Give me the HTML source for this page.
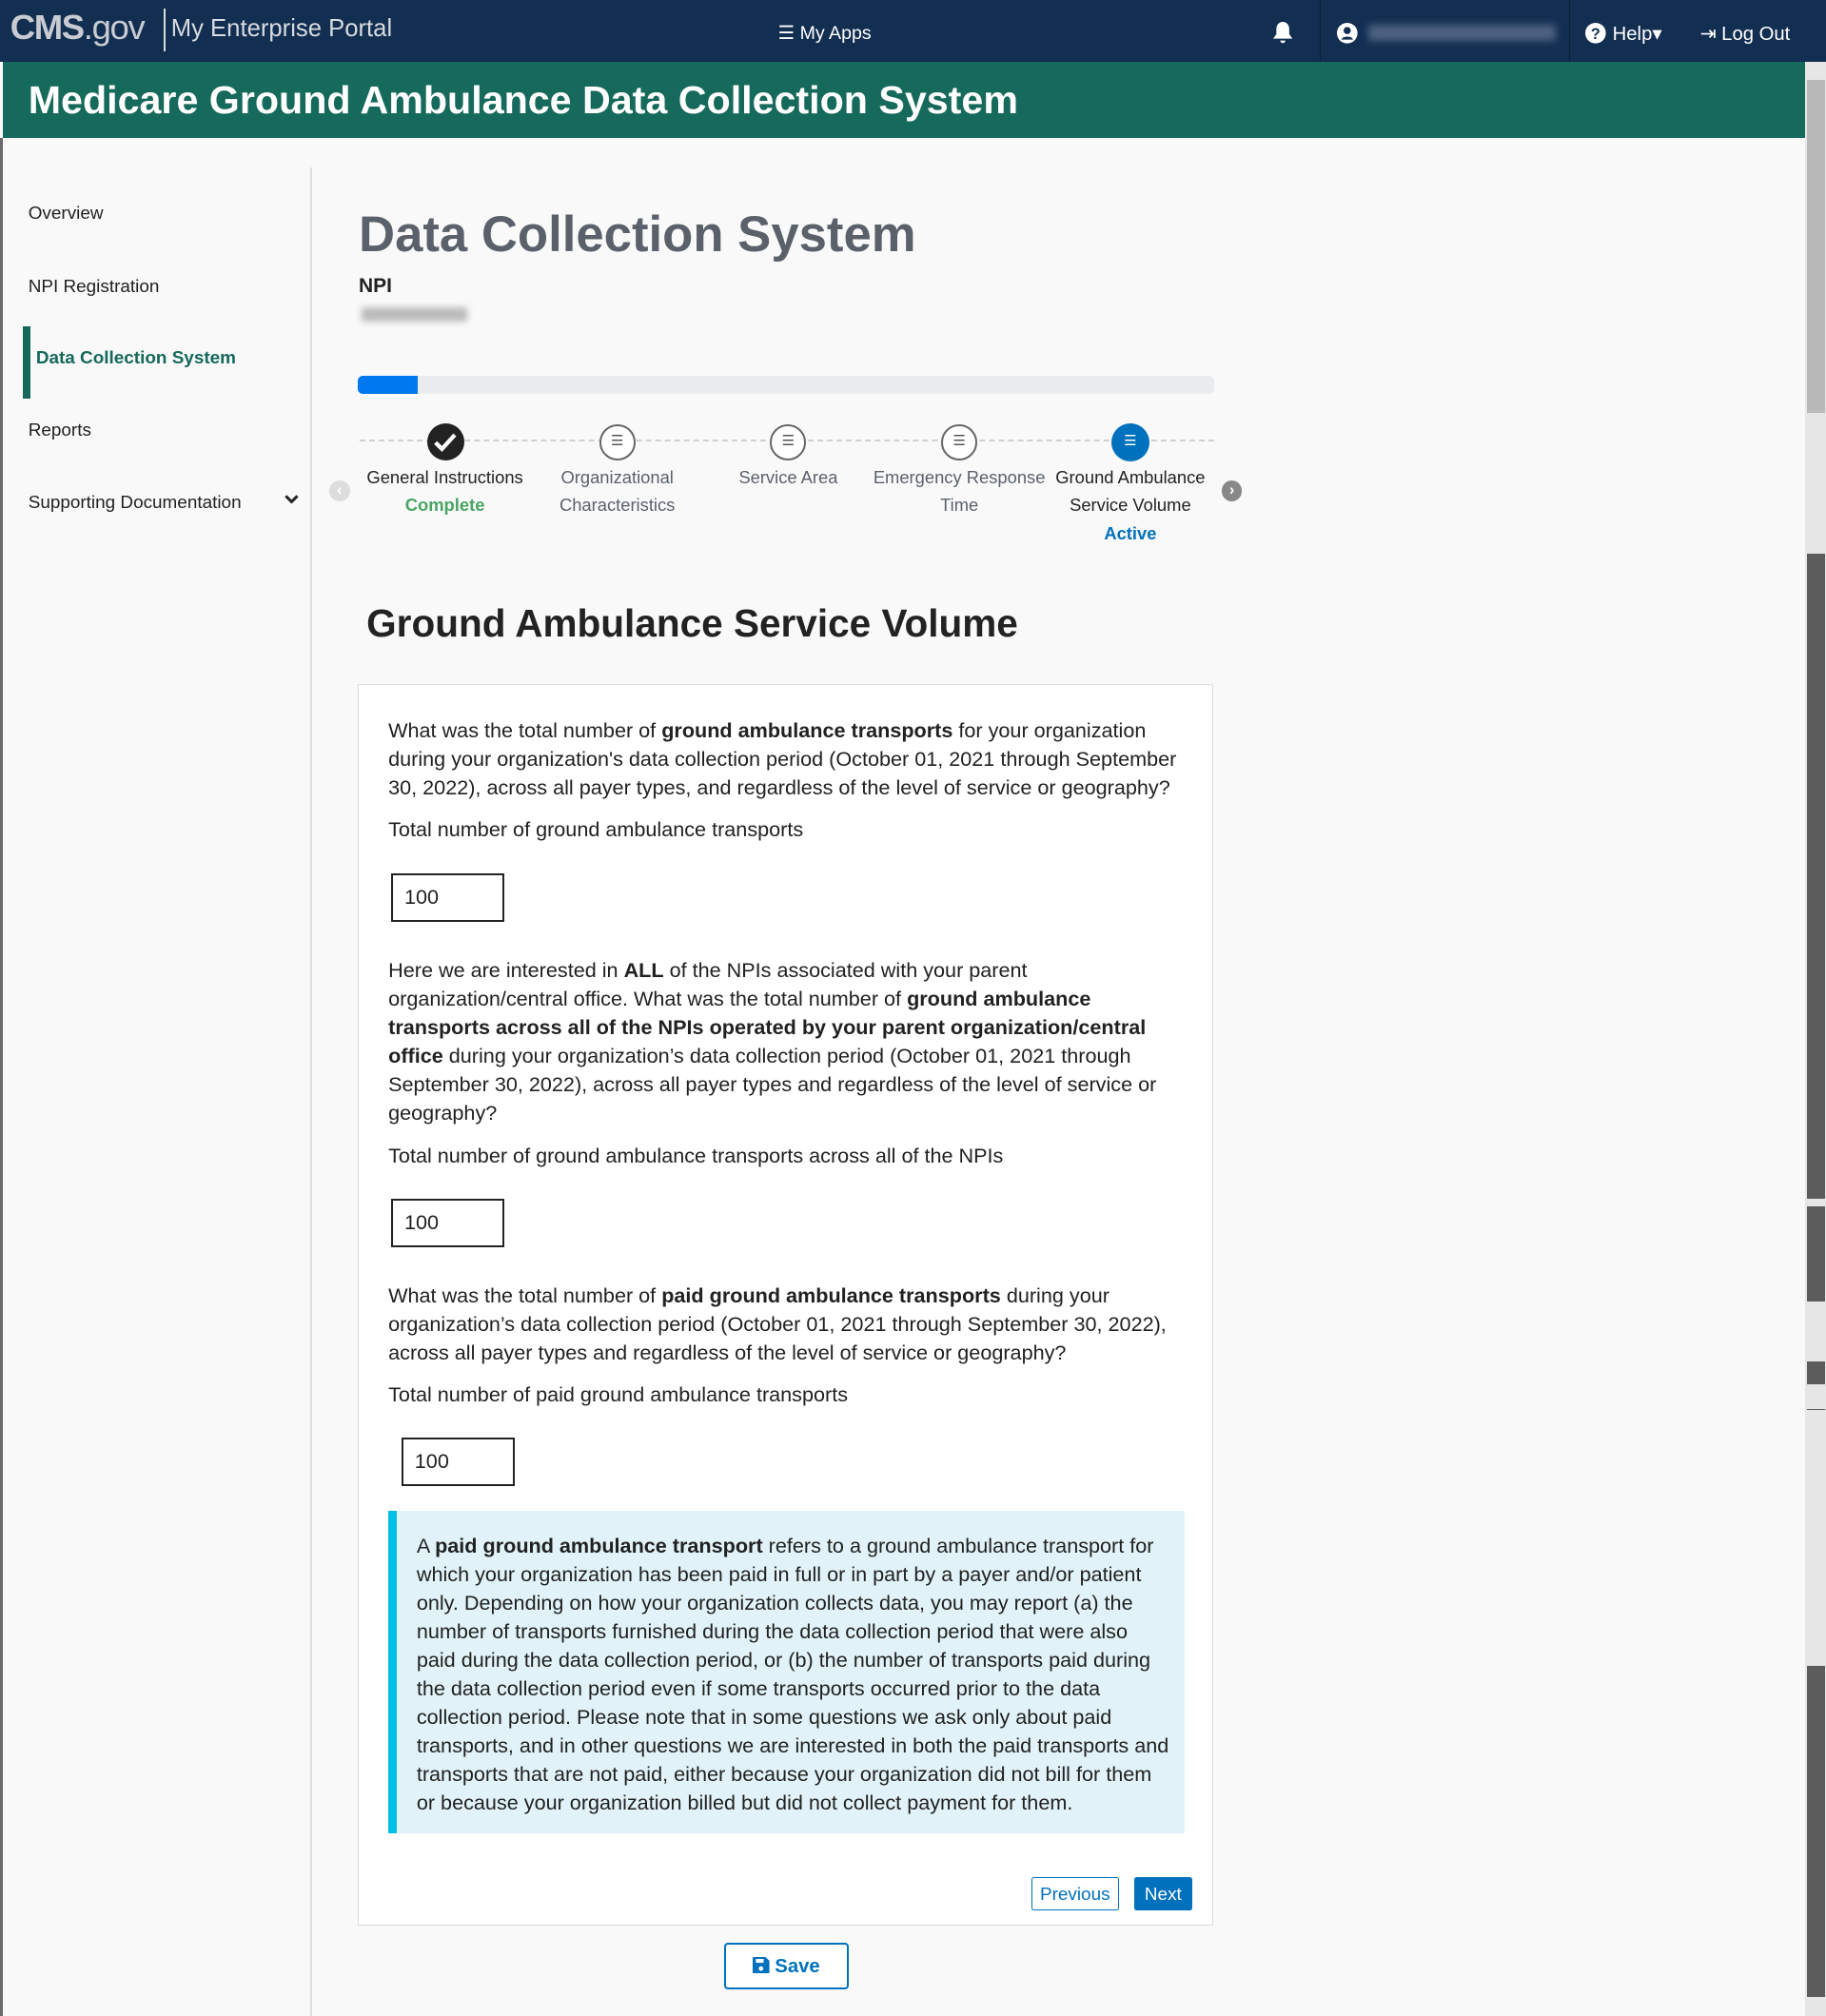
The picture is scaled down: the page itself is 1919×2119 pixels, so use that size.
<!DOCTYPE html>
<html><head><meta charset="utf-8"><style>
html,body{margin:0;padding:0;width:1919px;height:2119px;overflow:hidden;background:#f9f9f9;}
#w{zoom:1.35141;width:1420px;height:1568px;position:relative;font-family:"Liberation Sans",sans-serif;color:#212121;}
.a{position:absolute;white-space:nowrap;}
.nav{left:0;top:0;width:1420px;height:48px;background:#122e51;}
.hdr{left:2px;top:48px;width:1402px;height:59px;background:#166a5c;}
.q{font-size:16px;line-height:22.2px;color:#212121;}
.inp{border:2px solid #222;background:#fff;width:88px;font-size:16px;line-height:34px;padding-left:9px;box-sizing:border-box;height:38px;}
.circ{width:28px;height:28px;border-radius:50%;border:1.5px solid #666;background:#fff;box-sizing:border-box;}
.lbl{font-size:13.6px;color:#5b616b;text-align:center;line-height:22px;width:140px;}
</style></head><body><div id="w">
<div class="a nav"></div>
<div class="a" style="left:8px;top:6px;font-size:27px;color:#c8ccd2;font-weight:bold;letter-spacing:-1px;">CMS<span style="font-weight:normal">.gov</span></div>
<div class="a" style="left:127px;top:7px;width:2px;height:33px;background:#ddd"></div>
<div class="a" style="left:133px;top:12px;font-size:19px;color:#d7dbe0">My Enterprise Portal</div>
<div class="a" style="left:605px;top:17px;font-size:14.5px;color:#fff">☰ My Apps</div>
<svg class="a" style="left:990px;top:17px" width="15" height="17" viewBox="0 0 15 17"><path d="M7.5 0c-3 0-5 2.5-5 5.5v4L0 13h15l-2.5-3.5v-4C12.5 2.5 10.5 0 7.5 0zM5.5 14.5a2 2 0 004 0z" fill="#fff"/></svg>
<div class="a" style="left:1026px;top:0;width:1px;height:48px;background:#0b1f38"></div>
<svg class="a" style="left:1040px;top:18px" width="16" height="16"><circle cx="8" cy="8" r="8" fill="#fff"/><circle cx="8" cy="6" r="2.8" fill="#122e51"/><path d="M3.5 13c1-3 8-3 9 0" fill="#122e51"/></svg>
<div class="a" style="left:1064px;top:19px;width:146px;height:13px;background:#5b6f8c;filter:blur(3px);opacity:.8"></div>
<div class="a" style="left:1220px;top:0;width:1px;height:48px;background:#0b1f38"></div>
<svg class="a" style="left:1233px;top:18px" width="16" height="16"><circle cx="8" cy="8" r="8" fill="#fff"/><text x="8" y="12.5" text-anchor="middle" font-size="12" font-weight="bold" fill="#122e51" font-family="Liberation Sans">?</text></svg>
<div class="a" style="left:1254px;top:17px;font-size:15px;color:#fff">Help▾</div>
<div class="a" style="left:1322px;top:17px;font-size:15px;color:#fff">⇥ Log Out</div>
<div class="a hdr"></div>
<div class="a" style="left:22px;top:61px;font-size:30.5px;font-weight:bold;color:#fff">Medicare Ground Ambulance Data Collection System</div>
<div class="a" style="left:0;top:107px;width:2px;height:1461px;background:#6a6a6a"></div>
<div class="a" style="left:241px;top:130px;width:2px;height:1438px;background:#ddd"></div>
<div class="a" style="left:22px;top:158px;font-size:14px">Overview</div>
<div class="a" style="left:22px;top:215px;font-size:14px">NPI Registration</div>
<div class="a" style="left:18px;top:254px;width:6px;height:56px;background:#14695a"></div>
<div class="a" style="left:28px;top:271px;font-size:14px;font-weight:bold;color:#14695a">Data Collection System</div>
<div class="a" style="left:22px;top:327px;font-size:14px">Reports</div>
<div class="a" style="left:22px;top:383px;font-size:14px">Supporting Documentation</div>
<svg class="a" style="left:221px;top:385px" width="11" height="8"><path d="M1 1l4.5 4.5L10 1" stroke="#222" stroke-width="2.2" fill="none"/></svg>
<div class="a" style="left:279px;top:160px;font-size:39px;font-weight:bold;color:#5b616b">Data Collection System</div>
<div class="a" style="left:279px;top:214px;font-size:15.5px;font-weight:bold">NPI</div>
<div class="a" style="left:281px;top:239px;width:82px;height:11px;background:#bbb;filter:blur(2.5px)"></div>
<div class="a" style="left:278px;top:292px;width:666px;height:14px;background:#e9ecef;border-radius:4px;overflow:hidden"><div style="width:47px;height:14px;background:#0078f0"></div></div>
<div class="a" style="left:280px;top:342px;width:664px;border-top:2px dashed #d0d0d0"></div>
<div class="a" style="left:332px;top:329px;width:29px;height:29px;border-radius:50%;background:#222"></div>
<svg class="a" style="left:337px;top:335px" width="19" height="17"><path d="M2 9l5 5 10-11" stroke="#fff" stroke-width="3.2" fill="none"/></svg>
<div class="a circ" style="left:466px;top:330px"></div>
<div class="a circ" style="left:599px;top:330px"></div>
<div class="a circ" style="left:732px;top:330px"></div>
<div class="a" style="left:864px;top:329px;width:30px;height:30px;border-radius:50%;background:#0071bc"></div>
<div class="a" style="left:475px;top:336px;font-size:11px;color:#555">☰</div>
<div class="a" style="left:608px;top:336px;font-size:11px;color:#555">☰</div>
<div class="a" style="left:741px;top:336px;font-size:11px;color:#555">☰</div>
<div class="a" style="left:874px;top:336px;font-size:11px;color:#fff">☰</div>
<div class="a lbl" style="left:276px;top:360px;color:#222">General Instructions<br><b style="color:#4aa564">Complete</b></div>
<div class="a lbl" style="left:410px;top:360px">Organizational<br>Characteristics</div>
<div class="a lbl" style="left:543px;top:360px">Service Area</div>
<div class="a lbl" style="left:676px;top:360px">Emergency Response<br>Time</div>
<div class="a lbl" style="left:809px;top:360px;color:#222">Ground Ambulance<br>Service Volume<br><b style="color:#0071bc">Active</b></div>
<div class="a" style="left:256px;top:374px;width:16px;height:16px;border-radius:50%;background:#ddd;color:#fff;font-size:12px;line-height:16px;text-align:center;font-weight:bold">‹</div>
<div class="a" style="left:950px;top:374px;width:16px;height:16px;border-radius:50%;background:#888;color:#fff;font-size:12px;line-height:16px;text-align:center;font-weight:bold">›</div>
<div class="a" style="left:285px;top:468px;font-size:30px;font-weight:bold;color:#222">Ground Ambulance Service Volume</div>
<div class="a" style="left:278px;top:532px;width:664px;height:964px;background:#fff;border:1px solid #ddd"></div>
<div class="a q" style="left:302px;top:557px">What was the total number of <b>ground ambulance transports</b> for your organization<br>during your organization's data collection period (October 01, 2021 through September<br>30, 2022), across all payer types, and regardless of the level of service or geography?</div>
<div class="a q" style="left:302px;top:634px">Total number of ground ambulance transports</div>
<div class="a inp" style="left:304px;top:679px">100</div>
<div class="a q" style="left:302px;top:744px">Here we are interested in <b>ALL</b> of the NPIs associated with your parent<br>organization/central office. What was the total number of <b>ground ambulance<br>transports across all of the NPIs operated by your parent organization/central<br>office</b> during your organization’s data collection period (October 01, 2021 through<br>September 30, 2022), across all payer types and regardless of the level of service or<br>geography?</div>
<div class="a q" style="left:302px;top:888px">Total number of ground ambulance transports across all of the NPIs</div>
<div class="a inp" style="left:304px;top:932px">100</div>
<div class="a q" style="left:302px;top:997px">What was the total number of <b>paid ground ambulance transports</b> during your<br>organization’s data collection period (October 01, 2021 through September 30, 2022),<br>across all payer types and regardless of the level of service or geography?</div>
<div class="a q" style="left:302px;top:1074px">Total number of paid ground ambulance transports</div>
<div class="a inp" style="left:312px;top:1118px">100</div>
<div class="a" style="left:302px;top:1175px;width:619px;height:251px;background:#e1f3f8;border-left:7px solid #02bfe7;box-sizing:border-box"></div>
<div class="a q" style="left:324px;top:1191px">A <b>paid ground ambulance transport</b> refers to a ground ambulance transport for<br>which your organization has been paid in full or in part by a payer and/or patient<br>only. Depending on how your organization collects data, you may report (a) the<br>number of transports furnished during the data collection period that were also<br>paid during the data collection period, or (b) the number of transports paid during<br>the data collection period even if some transports occurred prior to the data<br>collection period. Please note that in some questions we ask only about paid<br>transports, and in other questions we are interested in both the paid transports and<br>transports that are not paid, either because your organization did not bill for them<br>or because your organization billed but did not collect payment for them.</div>
<div class="a" style="left:802px;top:1460px;width:68px;height:26px;border:1px solid #0071bc;border-radius:2px;box-sizing:border-box;background:#fff;color:#0071bc;font-size:14px;line-height:26px;text-align:center">Previous</div>
<div class="a" style="left:882px;top:1460px;width:45px;height:26px;border-radius:2px;background:#0071bc;color:#fff;font-size:14px;line-height:28px;text-align:center">Next</div>
<div class="a" style="left:563px;top:1511px;width:97px;height:36px;border:1.5px solid #0071bc;border-radius:3px;box-sizing:border-box;background:#fff;color:#0071bc;font-size:15px;font-weight:bold;line-height:35px;text-align:center">
<svg width="13" height="13" style="vertical-align:-1px"><path d="M0 1a1 1 0 011-1h9l3 3v9a1 1 0 01-1 1H1a1 1 0 01-1-1z" fill="#0071bc"/><rect x="2.5" y="1.5" width="6" height="3" fill="#fff"/><circle cx="6.5" cy="9" r="1.8" fill="#fff"/></svg> Save</div>
<div class="a" style="left:1404px;top:48px;width:16px;height:1520px;background:#e6e6e6"></div>
<div class="a" style="left:1405px;top:62px;width:14px;height:259px;background:#b9b9b9"></div>
<div class="a" style="left:1405px;top:431px;width:14px;height:501px;background:#5c5c5c"></div>
<div class="a" style="left:1405px;top:938px;width:14px;height:74px;background:#5c5c5c"></div>
<div class="a" style="left:1405px;top:1059px;width:14px;height:18px;background:#5c5c5c"></div>
<div class="a" style="left:1405px;top:1096px;width:14px;height:1px;background:#5c5c5c"></div>
<div class="a" style="left:1405px;top:1296px;width:14px;height:257px;background:#5c5c5c"></div>
</div></body></html>
